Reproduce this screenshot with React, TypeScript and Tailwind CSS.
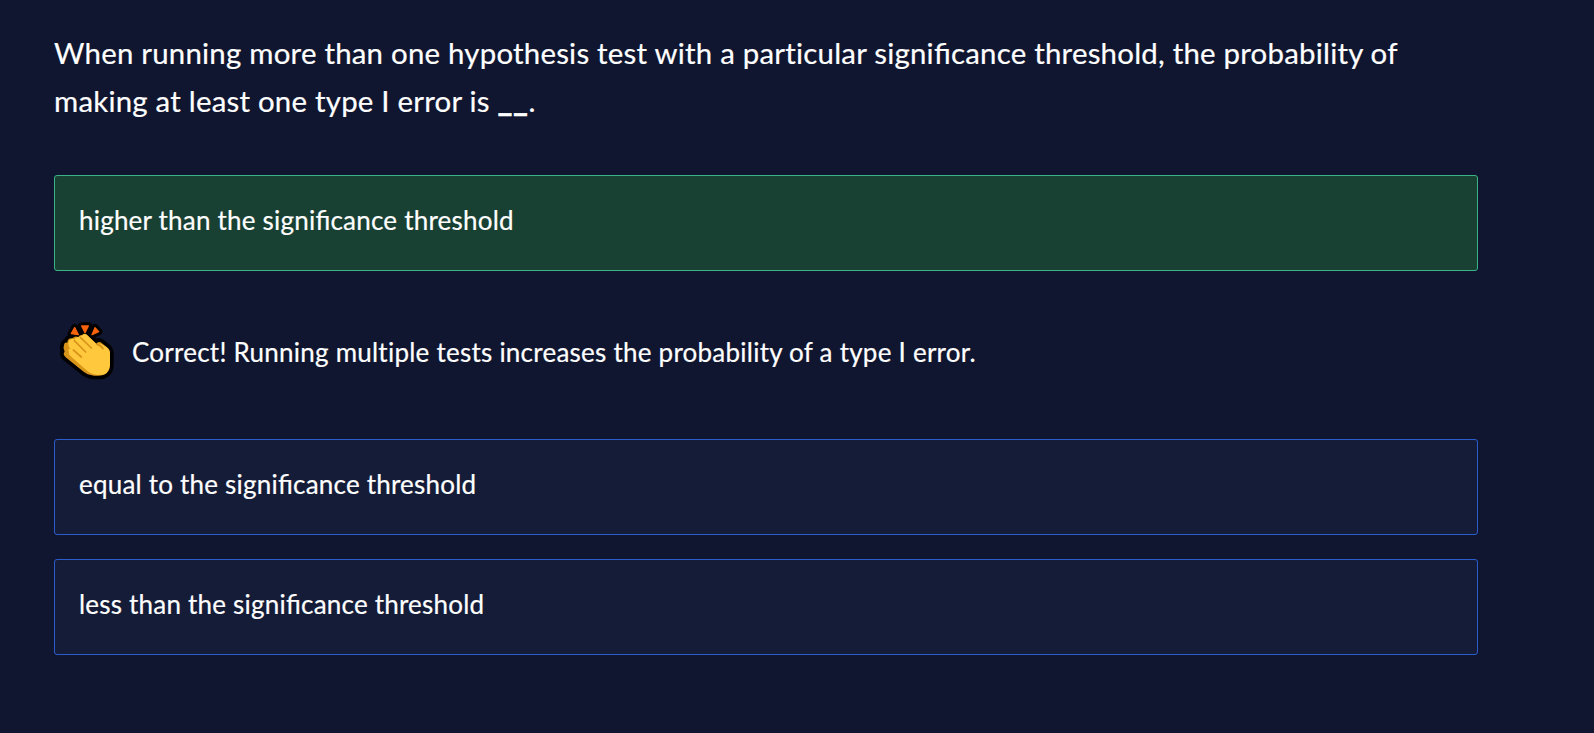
import type { ReactNode } from "react";

function Significance() {
  return <span className="[font-feature-settings:'liga'_1]">significance</span>;
}

function ClapIcon() {
  const rays = "M74 54 L85 75 L64 72 Z M95 49 L115 49 L105 69 Z M135 54 L146 66 L126 75 Z";
  const hands =
    "M42 106 Q43 97 52 99 Q53 84 68 86 Q74 77 85 82 Q88 76 96 76 Q103 68 111 76 L139 102 Q143 94 152 98 L170 112 Q180 120 180 132 V166 Q178 198 145 198 H132 Q112 196 98 184 L47 143 Q37 133 44 126 Q38 116 42 106 Z";
  return (
    <svg className="h-[60px] w-[56px] shrink-0" viewBox="27 37 168 180" aria-hidden="true">
      <g fill="#000" stroke="#000" strokeWidth="22" strokeLinejoin="round">
        <path d={rays} />
        <path d={hands} />
      </g>
      <path d={rays} fill="#f7630c" stroke="#f7630c" strokeWidth="4" strokeLinejoin="round" />
      <path d={hands} fill="#d9941a" />
      <path
        d="M58 92 Q66 83 75 90 Q75 82 86 83 Q90 77 96 78 Q104 68 112 77 L140 104 Q146 99 153 103 L170 113 Q180 120 180 132 V166 Q178 196 147 196 Q127 196 112 184 L62 140 Q52 130 60 123 L66 123 L56 110 Q52 100 58 92 Z"
        fill="#ffc83d"
      />
      <g fill="none" stroke="#d9941a" strokeWidth="5" strokeLinecap="round">
        <path d="M73 93 L107 127" />
        <path d="M91 83 L124 115" />
        <path d="M60 122 L92 143" stroke="#ffc83d" strokeWidth="10" />
        <path d="M70 121 L94 142" />
        <path d="M141 104 Q151 105 159 117" />
      </g>
    </svg>
  );
}

function Option({ correct = false, children }: { correct?: boolean; children: ReactNode }) {
  return (
    <button
      className={`block h-24 w-full rounded-[3px] border px-6 text-left text-[26px] leading-10 tracking-[0.21px] ${
        correct ? "border-[#3cb387] bg-[#184033]" : "border-[#2b5ccb] bg-[#151c38]"
      }`}
    >
      <span className="block pb-1.5">{children}</span>
    </button>
  );
}

export default function App() {
  return (
    <main className="min-h-screen bg-[#10162f] pt-[29px] pl-[54px] font-[Lato,sans-serif] text-white [-webkit-text-stroke:0.2px_white]">
      <div className="w-[1424px]">
        <h1 className="h-24 text-[29.4px] leading-[48px] font-normal tracking-[0.23px]">
          When running more than one hypothesis test with a particular <Significance /> threshold, the probability of
          <br />
          making at least one type I error is{" "}
          <span className="relative -top-[1px] text-[32px] leading-none font-bold tracking-[0.5px] [-webkit-text-stroke:0.6px_white]">
            __
          </span>
          .
        </h1>
        <div className="mt-[50px]">
          <Option correct>
            higher than the <Significance /> threshold
          </Option>
        </div>
        <div className="flex h-[168px] items-center gap-[17px] pb-1.5 pl-[5px]">
          <ClapIcon />
          <p className="text-[26px] leading-10 tracking-[0.24px]">
            Correct! Running multiple tests increases the probability of a type I error.
          </p>
        </div>
        <div className="flex flex-col gap-6">
          <Option>
            equal to the <Significance /> threshold
          </Option>
          <Option>
            less than the <Significance /> threshold
          </Option>
        </div>
      </div>
    </main>
  );
}
